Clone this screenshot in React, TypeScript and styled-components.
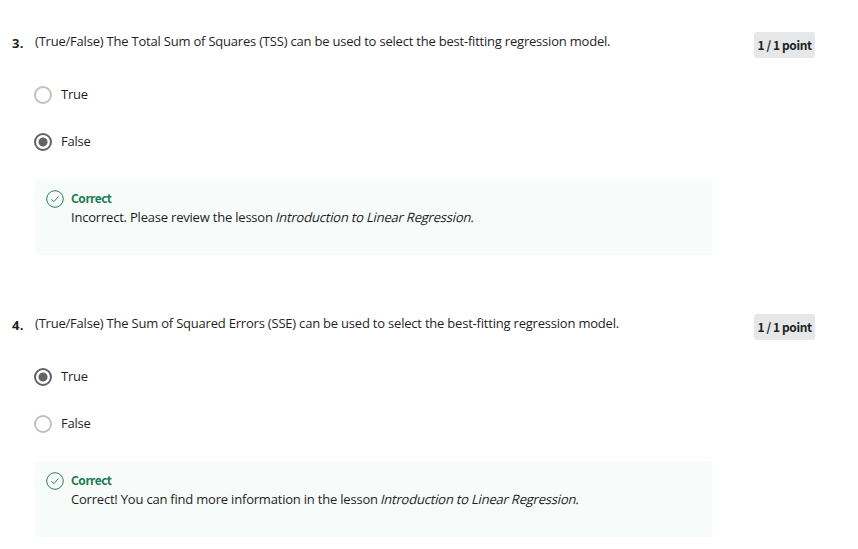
import React from "react";
import styled, { createGlobalStyle } from "styled-components";

const Global = createGlobalStyle`
  * { box-sizing: border-box; }
  body { margin: 0; background: #fff; color: #1f1f1f; font-family: "Open Sans", sans-serif; font-size: 13px; overflow: hidden; }
`;

const Page = styled.main`
  width: 858px;
  height: 549px;
  padding-top: 32px;
  overflow: hidden;
`;

const Question = styled.section`
  display: grid;
  grid-template-columns: 34px 720px auto;
  align-items: start;
  height: 282px;
`;

const Number = styled.div`
  padding-left: 12px;
  font-size: 13px;
  font-weight: 700;
  line-height: 22px;
  letter-spacing: 0.4px;
`;

const Prompt = styled.p`
  margin: 0 0 0 1px;
  line-height: 18px;
  letter-spacing: -0.208px;
  white-space: nowrap;
`;

const Points = styled.div`
  width: 61px;
  height: 26px;
  border-radius: 3px;
  background: #e5e7e8;
  font-family: "Noto Sans CJK SC", sans-serif;
  font-size: 12px;
  font-weight: 700;
  line-height: 25px;
  letter-spacing: -0.4px;
  text-align: center;
  white-space: nowrap;
`;

const Options = styled.div`
  display: flex;
  flex-direction: column;
  gap: 27px;
  margin-top: 34px;
`;

const Option = styled.div`
  display: flex;
  align-items: center;
  gap: 9px;
  height: 20px;
  letter-spacing: -0.2px;
`;

const Radio = styled.span<{ $checked: boolean }>`
  width: 18px;
  height: 18px;
  margin-top: 2px;
  border: 2px solid ${(p) => (p.$checked ? "#636363" : "#c1c1c1")};
  border-radius: 50%;
  background: ${(p) =>
    p.$checked ? "radial-gradient(circle, #636363 4.1px, transparent 4.9px)" : "transparent"};
`;

const Feedback = styled.div`
  display: flex;
  width: 677px;
  height: 76px;
  margin: 28px 0 0 1px;
  padding: 10px 11px;
  gap: 7px;
  background: #f7fbf9;
  line-height: 19px;
  letter-spacing: -0.205px;

  svg {
    margin-top: 1px;
  }
`;

const LessonTitle = styled.em`
  display: inline-block;
  font-style: normal;
  transform: skewX(-14deg);
`;

const Verdict = styled.strong`
  display: block;
  height: 19px;
  color: #1d7c50;
  font-family: "Noto Sans CJK SC", sans-serif;
  font-size: 12px;
  font-weight: 700;
  line-height: 17px;
  letter-spacing: -0.5px;
`;

const CheckIcon = () => (
  <svg width="18" height="18" viewBox="0 0 18 18" fill="none" stroke="#1d7c50" strokeWidth="0.95">
    <circle cx="9" cy="9" r="8.3" />
    <path d="M5.3 9.2 7.9 11.6 12.5 6.4" />
  </svg>
);

const questions = [
  { number: 3, measure: "Total Sum of Squares (TSS)", answer: "False", feedback: "Incorrect. Please review the lesson " },
  { number: 4, measure: "Sum of Squared Errors (SSE)", answer: "True", feedback: "Correct! You can find more information in the lesson " },
];

export default function App() {
  return (
    <>
      <Global />
      <Page>
        {questions.map((q) => (
          <Question key={q.number}>
            <Number>{q.number}.</Number>
            <div>
              <Prompt>(True/False) The {q.measure} can be used to select the best-fitting regression model.</Prompt>
              <Options>
                {["True", "False"].map((label) => (
                  <Option key={label}>
                    <Radio $checked={label === q.answer} />
                    {label}
                  </Option>
                ))}
              </Options>
              <Feedback>
                <CheckIcon />
                <div>
                  <Verdict>Correct</Verdict>
                  {q.feedback}
                  <LessonTitle>Introduction to Linear Regression.</LessonTitle>
                </div>
              </Feedback>
            </div>
            <Points>1 / 1 point</Points>
          </Question>
        ))}
      </Page>
    </>
  );
}
